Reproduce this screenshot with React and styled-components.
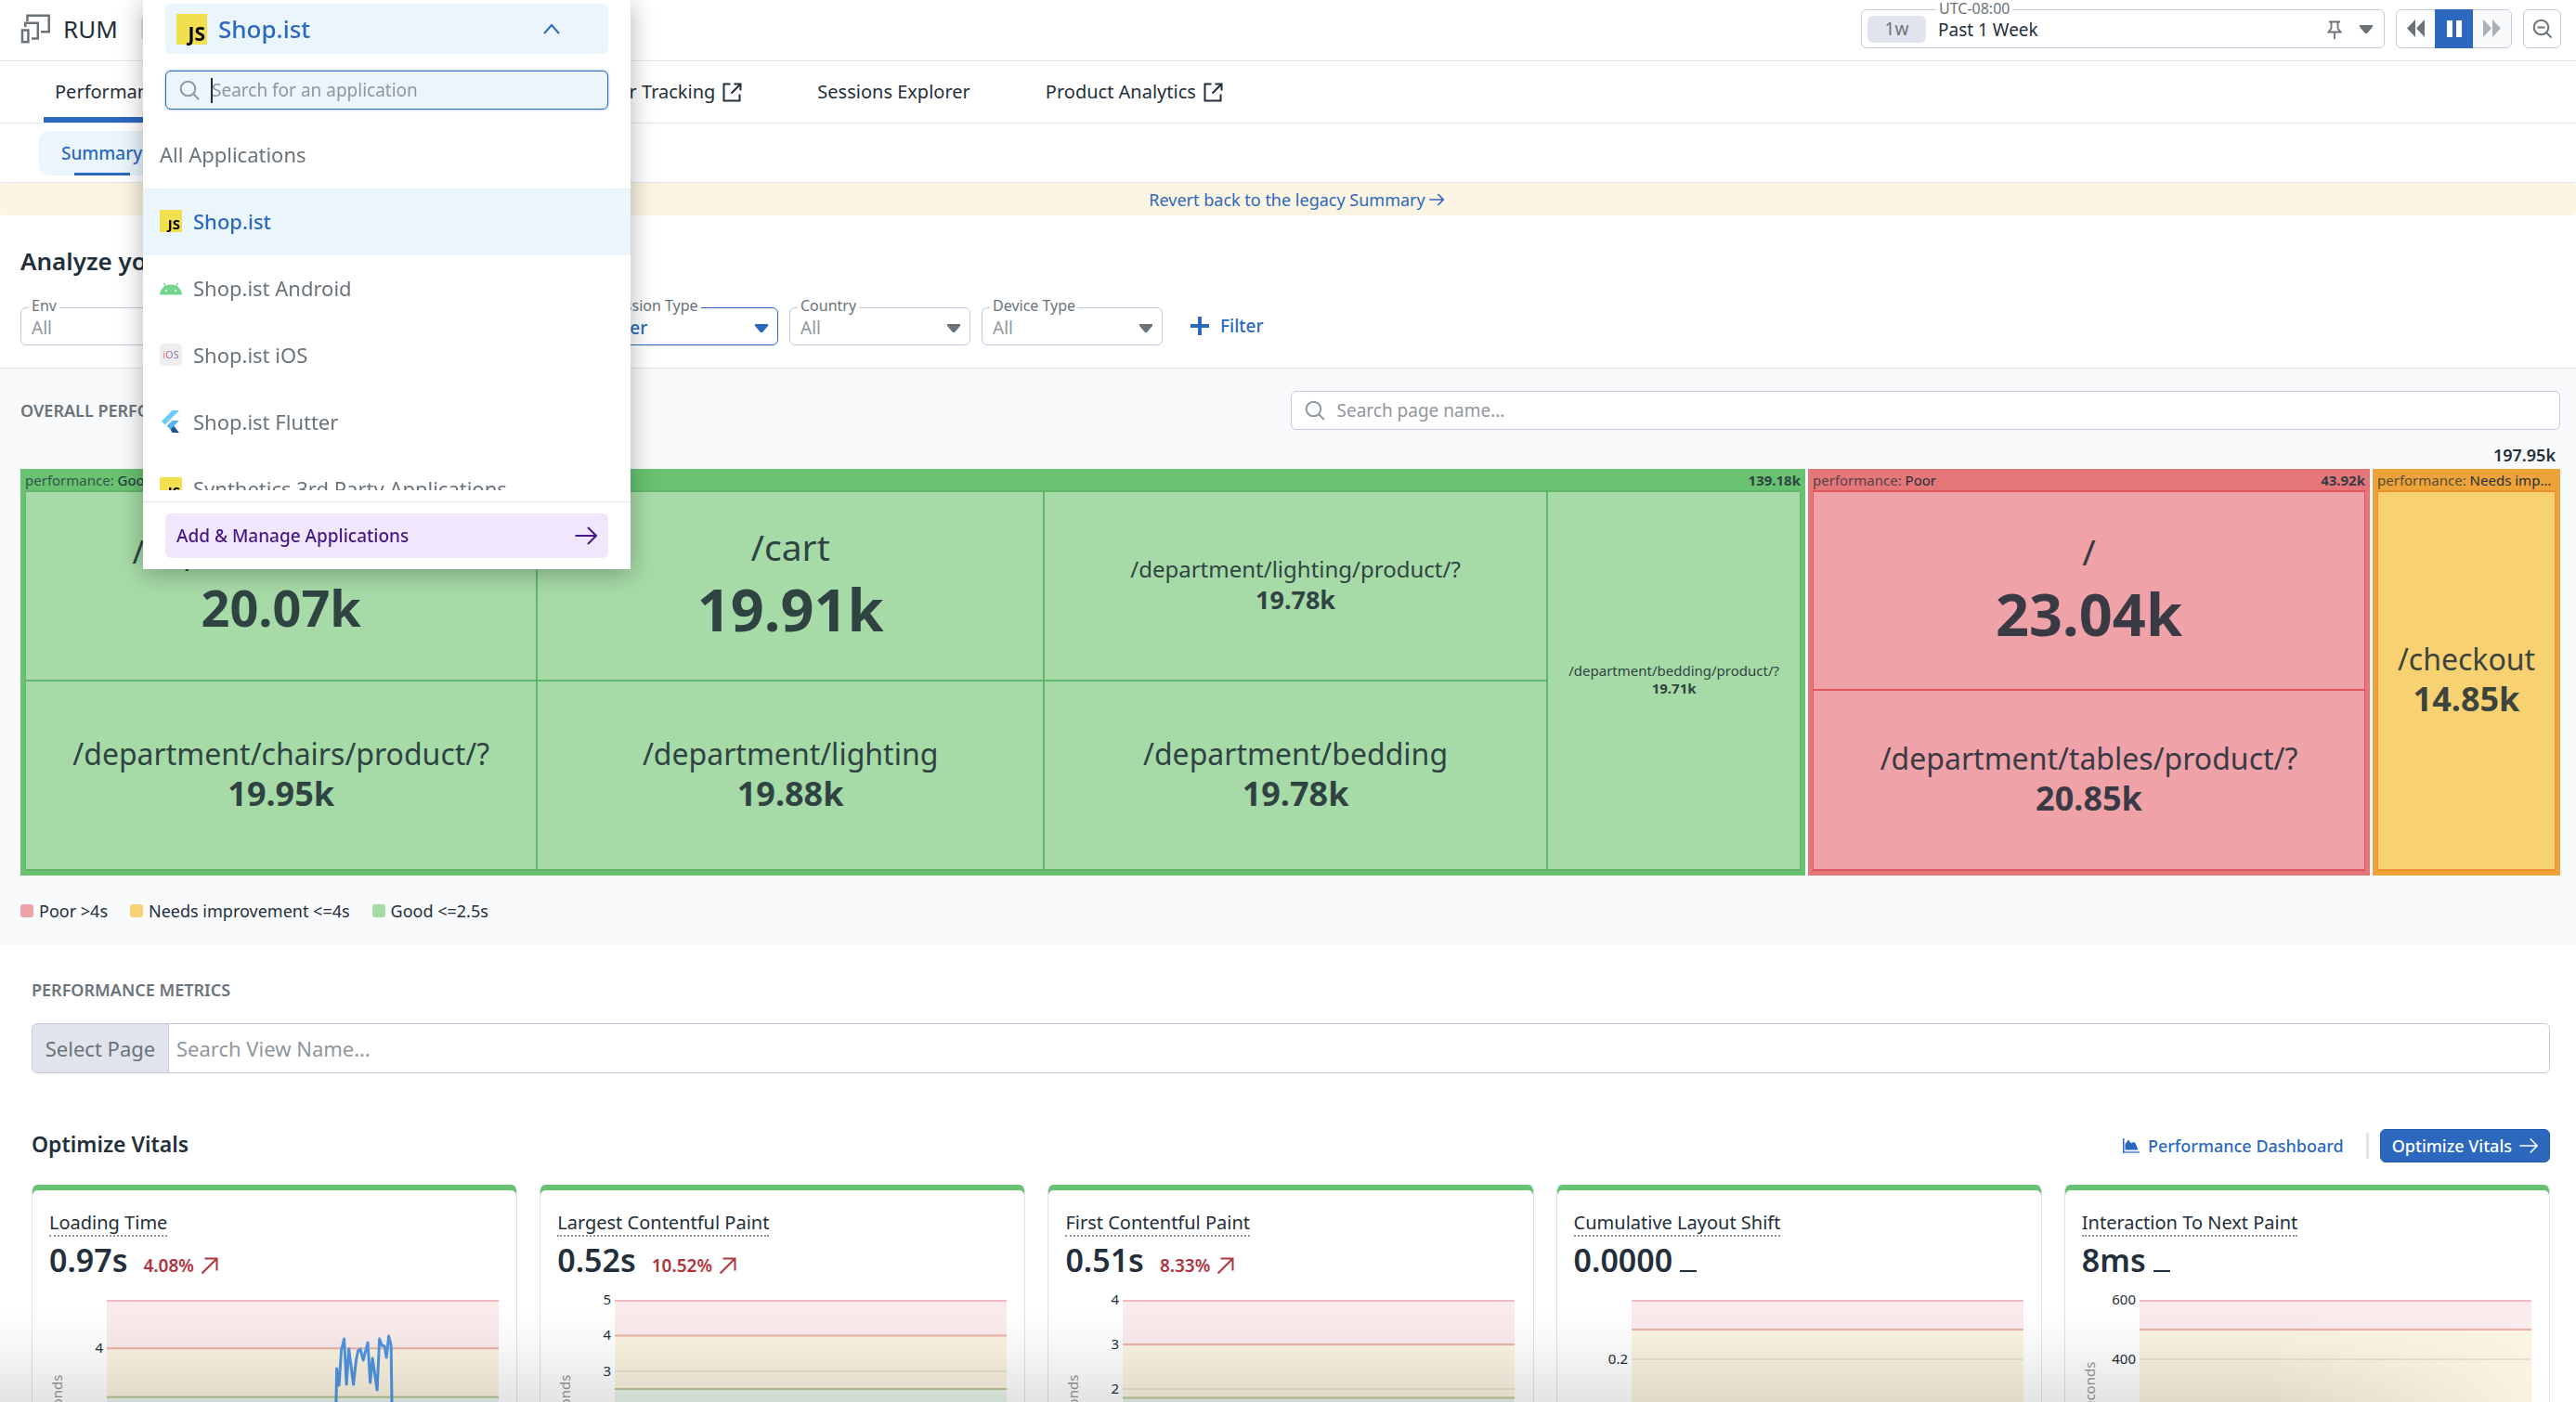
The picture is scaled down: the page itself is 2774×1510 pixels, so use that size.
import React from "react";
import styled, { createGlobalStyle, css } from "styled-components";

const c = {
  ink: "#232f3a",
  muted: "#6a737a",
  soft: "#8f979d",
  blue: "#2c68be",
  paleBlue: "#ebf5fc",
  line: "#e1e4ed",
  field: "#c3c8dc",
  red: "#b0343e",
};

const Global = createGlobalStyle`
  *, *::before, *::after { box-sizing: border-box; }
  body { margin: 0; background: #fff; color: ${c.ink}; font-family: "Noto Sans", "Open Sans", sans-serif; font-size: 19px; line-height: 28px; }
  button, input, select { font: inherit; color: inherit; margin: 0; }
  a { color: inherit; text-decoration: none; }
  h1, h2, h3, ul, p { margin: 0; padding: 0; font-size: inherit; }
  ul { list-style: none; }
  svg { display: block; flex: none; }
`;

const Page = styled.div`
  position: relative;
  height: 100vh;
  overflow-y: auto;
  scrollbar-width: none;
`;

/* ---------- icons ---------- */
const Svg = ({ w, h, vb, sw = 2, fill = "none", children, ...rest }) => (
  <svg width={w} height={h} viewBox={vb || `0 0 ${w} ${h}`} fill={fill} stroke={fill === "none" ? "currentColor" : "none"} strokeWidth={sw} aria-hidden="true" {...rest}>
    {children}
  </svg>
);
const RumIcon = () => (
  <Svg w={33} h={32} sw={2.5} color={c.muted}>
    <path d="M7.5 8V1.8h23.2v17.4H22" />
    <path d="M5.2 14V9.8h13.6v16.8H12" />
    <path d="M2 17.6h6.4v12.6H2z" />
  </Svg>
);
const SearchIcon = () => (
  <Svg w={22} h={22}>
    <circle cx="9.5" cy="9.5" r="7.8" />
    <path d="M15 15l6 6" />
  </Svg>
);
const ExternalIcon = () => (
  <Svg w={21} h={21}>
    <path d="M8.5 1.5H1.5v18h17v-7" />
    <path d="M9.5 11.5L19 2M12.5 1.5h7v7" />
  </Svg>
);
const ArrowRight = ({ size = 24, sw = 2 }) => (
  <Svg w={size} h={size} vb="0 0 24 24" sw={sw}>
    <path d="M0.5 12h22M14 3l9 9-9 9" />
  </Svg>
);
const ArrowUpRight = () => (
  <Svg w={19} h={19}>
    <path d="M1.5 17.5L17 2M4.5 1.5h13v13" />
  </Svg>
);
const Caret = () => (
  <Svg w={14} h={9} fill="currentColor">
    <path d="M0 0h14v2L8 9H6L0 2z" />
  </Svg>
);
const ChevronUp = () => (
  <Svg w={18} h={12}>
    <path d="M1 11l8-9 8 9" />
  </Svg>
);
const PlusIcon = () => (
  <Svg w={20} h={20} sw={4}>
    <path d="M10 0v20M0 10h20" />
  </Svg>
);
const PinIcon = () => (
  <Svg w={16} h={20} sw={1.8}>
    <path d="M2 1.5h12M4.5 1.5v7L1.5 12.500h13l-3-4v-7M8 12.500V20" />
  </Svg>
);
const RewindIcon = () => (
  <Svg w={19} h={19} fill="currentColor">
    <path d="M9 0v19L0 9.500zM19 0v19L10 9.500z" />
  </Svg>
);
const ForwardIcon = () => (
  <Svg w={19} h={19} fill="currentColor">
    <path d="M0 0v19l9-9.500zM10 0v19l9-9.500z" />
  </Svg>
);
const PauseIcon = () => (
  <Svg w={16} h={18} fill="currentColor">
    <path d="M0 0h6v18H0zM10 0h6v18h-6z" />
  </Svg>
);
const ZoomOutIcon = () => (
  <Svg w={21} h={21}>
    <circle cx="9.500" cy="9.500" r="7.800" />
    <path d="M15 15l5.500 5.500M5.500 9.500h8" />
  </Svg>
);
const DashboardIcon = () => (
  <Svg w={18} h={16} fill="currentColor">
    <path d="M0 0h1.500v16H0z" />
    <path d="M2.500 12.500V6l3.500-4.500 3 4 2-1.500 2.500 1 3 7.500z" />
    <path d="M1 14h17v2H1z" opacity=".6" />
  </Svg>
);
const JsTile = styled.span`
  flex: none;
  display: flex;
  align-items: flex-end;
  justify-content: flex-end;
  width: ${(p) => p.$size}px;
  height: ${(p) => p.$size}px;
  padding-right: 2px;
  background: #f2df4f;
  color: #000;
  font-size: ${(p) => (p.$size > 30 ? 21 : 15)}px;
  line-height: ${(p) => (p.$size > 30 ? 24 : 18)}px;
  font-weight: 700;
`;
const IosTile = styled.span`
  flex: none;
  width: 24px;
  height: 24px;
  border-radius: 5px;
  background: #eceef0;
  font-size: 11px;
  line-height: 24px;
  text-align: center;
  & > span {
    background: linear-gradient(90deg, #e8875a, #c0508c, #5a7fd8, #d04a5a);
    background-clip: text;
    color: transparent;
  }
`;
const AndroidIcon = () => (
  <svg width="24" height="24" viewBox="0 0 24 24" aria-hidden="true">
    <path d="M0 19.500a12 11 0 0 1 24 0z" fill="#72d68c" />
    <path d="M6.500 10.500L4.500 6.500M17.500 10.500l2-4" stroke="#72d68c" strokeWidth="1.200" />
    <circle cx="6.800" cy="15" r="1" fill="#fff" />
    <circle cx="17.200" cy="15" r="1" fill="#fff" />
  </svg>
);
const FlutterIcon = () => (
  <svg width="24" height="24" viewBox="0 0 24 24" aria-hidden="true">
    <path d="M13.500 0H21L5.700 15.500 2 11.800z" fill="#6bcbfb" />
    <path d="M13.500 11H21l-9.500 9.500-3.800-3.800z" fill="#55b4ef" />
    <path d="M11.500 20.500l3.700-3.700L21 24h-7.500z" fill="#205396" />
  </svg>
);

/* ---------- top bar ---------- */
const TopBar = styled.header`
  display: flex;
  align-items: center;
  height: 66px;
  padding: 0 16px 4px 22px;
  border-bottom: 1px solid ${c.line};
`;
const Product = styled.h1`
  display: flex;
  align-items: center;
  gap: 13px;
  font-size: 26px;
  font-weight: 400;
`;
const BarDivider = styled.span`
  width: 3px;
  height: 22px;
  margin-left: 25px;
  background: ${c.line};
`;
const TimeTools = styled.div`
  display: flex;
  gap: 12px;
  margin-left: auto;
`;
const outlined = css`
  height: 42px;
  border: 1px solid ${c.field};
  border-radius: 6px;
  background: #fff;
`;
const TimePicker = styled.button`
  ${outlined}
  position: relative;
  display: flex;
  align-items: center;
  width: 564px;
  padding: 2px 12px 0 6px;
  font-size: 19px;
  text-align: left;
`;
const Notch = styled.span`
  position: absolute;
  top: -12px;
  left: ${(p) => p.$left || 9}px;
  padding: 0 3px;
  background: linear-gradient(transparent 10px, #fff 10px);
  color: ${c.muted};
  font-size: 16px;
  line-height: 20px;
`;
const Chip = styled.span`
  width: 63px;
  height: 29px;
  margin-right: 13px;
  border-radius: 6px;
  background: ${c.line};
  color: ${c.muted};
  text-align: center;
`;
const PickerTail = styled.span`
  display: flex;
  align-items: center;
  gap: 19px;
  margin-left: auto;
  color: ${c.muted};
`;
const ButtonGroup = styled.div`
  ${outlined}
  display: flex;
`;
const GroupButton = styled.button`
  display: flex;
  align-items: center;
  justify-content: center;
  width: 41px;
  margin: ${(p) => (p.$on ? "-1px 0" : "0")};
  border: 0;
  padding: 0;
  border-radius: ${(p) => (p.$on ? "0" : "5px")};
  background: ${(p) => (p.$on ? c.blue : p.$dim ? "#f9fafc" : "transparent")};
  color: ${(p) => (p.$on ? "#fff" : p.$dim ? "#abb1b6" : c.muted)};
`;
const IconButton = styled.button`
  ${outlined}
  display: flex;
  align-items: center;
  justify-content: center;
  width: 41px;
  padding: 0;
  color: ${c.muted};
`;

/* ---------- application menu ---------- */
const Menu = styled.section`
  position: absolute;
  z-index: 5;
  top: 0;
  left: 154px;
  width: 525px;
  padding-top: 4px;
  background: #fff;
  box-shadow: 0 4px 26px rgba(0, 0, 0, 0.3);
`;
const MenuTrigger = styled.button`
  display: flex;
  align-items: center;
  gap: 12px;
  width: 477px;
  height: 54px;
  margin: 0 24px;
  padding: 0 52px 0 12px;
  border: 0;
  border-radius: 6px;
  background: ${c.paleBlue};
  color: ${c.blue};
  font-size: 26px;
  font-weight: 500;
  & > svg { margin-left: auto; }
`;
const MenuSearch = styled.label`
  position: relative;
  display: flex;
  align-items: center;
  gap: 13px;
  height: 42px;
  margin: 18px 24px 0;
  padding: 0 14px;
  border: 1px solid ${c.blue};
  border-radius: 6px;
  background: ${c.paleBlue};
  box-shadow: 0 0 3px rgba(44, 104, 190, 0.5);
  color: ${c.soft};
`;
const BareInput = styled.input`
  flex: 1;
  min-width: 0;
  border: 0;
  padding: 0;
  outline: 0;
  background: transparent;
  &::placeholder { color: ${c.soft}; opacity: 1; }
`;
const TextCursor = styled.span`
  position: absolute;
  left: 48px;
  width: 2px;
  height: 27px;
  background: ${c.ink};
`;
const AppList = styled.ul`
  height: 397px;
  margin-top: 13px;
  overflow-y: auto;
  scrollbar-width: none;
`;
const AppItem = styled.button`
  display: flex;
  align-items: center;
  gap: 12px;
  width: 100%;
  height: 72px;
  padding: 0 18px 2px;
  border: 0;
  background: ${(p) => (p.$on ? c.paleBlue : "#fff")};
  color: ${(p) => (p.$on ? c.blue : c.muted)};
  font-size: 22px;
  font-weight: ${(p) => (p.$on ? 500 : 400)};
  text-align: left;
`;
const MenuFooter = styled.div`
  margin-top: 12px;
  padding: 12px 24px;
  border-top: 1px solid ${c.line};
`;
const ManageLink = styled.a`
  display: flex;
  align-items: center;
  justify-content: space-between;
  height: 48px;
  padding: 0 12px;
  border-radius: 6px;
  background: #f1e7fc;
  color: #451784;
  font-weight: 500;
`;

/* ---------- navigation ---------- */
const Tabs = styled.nav`
  display: flex;
  gap: 57px;
  height: 67px;
  padding-left: 47px;
  border-bottom: 1px solid ${c.line};
  font-size: 20px;
`;
const Tab = styled.a`
  display: flex;
  align-items: center;
  gap: 8px;
  padding: 6px 12px 0;
  border-bottom: 6px solid ${(p) => (p.$on ? c.blue : "transparent")};
`;
const SubTabs = styled.nav`
  height: 64px;
  padding: 8px 42px;
  border-bottom: 1px solid ${c.line};
`;
const SubTab = styled.a`
  display: inline-flex;
  flex-direction: column;
  justify-content: space-between;
  align-items: center;
  height: 48px;
  padding: 10px 24px 0;
  border-radius: 10px;
  background: ${c.paleBlue};
  color: ${c.blue};
  font-weight: 500;
  &::after { content: ""; width: 60px; height: 3px; background: ${c.blue}; }
`;
const Banner = styled.div`
  display: flex;
  justify-content: center;
  height: 35px;
  padding-left: 18px;
  border-radius: 4px;
  background: #fdf5e3;
  color: ${c.blue};
  font-size: 18px;
  line-height: 36px;
  & > a { display: flex; align-items: center; gap: 4px; }
`;

/* ---------- filters ---------- */
const Filters = styled.section`
  padding: 35px 22px 24px;
  border-bottom: 1px solid ${c.line};
`;
const Heading = styled.h2`
  font-size: 26px;
  line-height: 28px;
  font-weight: 600;
`;
const FilterRow = styled.div`
  display: flex;
  align-items: center;
  gap: 12px;
  margin-top: 36px;
`;
const FilterField = styled.label`
  position: relative;
  width: 195px;
  color: ${(p) => (p.$on ? c.blue : c.muted)};
  & > svg { position: absolute; right: 11px; top: 18px; pointer-events: none; }
`;
const Select = styled.select`
  display: block;
  width: 100%;
  height: 41px;
  padding: 2px 30px 0 11px;
  appearance: none;
  border: 1px solid ${(p) => (p.$on ? c.blue : c.field)};
  border-radius: 6px;
  background: #fff;
  color: ${(p) => (p.$on ? c.blue : c.soft)};
  font-weight: ${(p) => (p.$on ? 500 : 400)};
`;
const AddFilter = styled.button`
  display: flex;
  align-items: center;
  gap: 12px;
  margin-left: 18px;
  padding: 0 0 1px;
  border: 0;
  background: none;
  color: ${c.blue};
  font-weight: 500;
`;

/* ---------- overall performance ---------- */
const Overall = styled.section`
  padding: 24px 17px 23px 22px;
  background: #f9fafc;
`;
const OverallHead = styled.div`
  display: grid;
  grid-template-columns: 1fr 1fr;
  align-items: center;
`;
const Eyebrow = styled.h2`
  color: ${c.muted};
  font-size: 18px;
  font-weight: 600;
`;
const PageSearch = styled.label`
  ${outlined}
  display: flex;
  align-items: center;
  gap: 13px;
  padding: 0 14px;
  color: ${c.soft};
`;
const Total = styled.p`
  padding: 13px 5px 1px 0;
  text-align: right;
  font-size: 18px;
  font-weight: 600;
`;
const Treemap = styled.div`
  display: grid;
  grid-template-columns: 1922fr 605fr 202fr;
  gap: 3px;
  height: 438px;
`;
const tones = {
  good: { head: "#69c271", cell: "#a6dba7", line: "#64b56c", ink: "#304343" },
  poor: { head: "#e57779", cell: "#efa2a8", line: "#dd5660", ink: "#3a3a45" },
  warn: { head: "#eda338", cell: "#f8d272", line: "#e8922f", ink: "#3c443c" },
};
const Group = styled.section`
  min-width: 0;
  display: flex;
  flex-direction: column;
  padding: 0 5px 5px;
  background: ${(p) => tones[p.$tone].head};
  color: ${(p) => tones[p.$tone].ink};
`;
const GroupHead = styled.h3`
  display: flex;
  justify-content: space-between;
  height: 23px;
  font-size: 15px;
  line-height: 24px;
  font-weight: 400;
  & > span { white-space: nowrap; overflow: hidden; text-overflow: ellipsis; color: ${c.ink}; }
  & > span > span { opacity: 0.75; }
`;
const Cells = styled.div`
  flex: 1;
  display: grid;
  grid-template-columns: ${(p) => p.$cols || "1fr"};
  grid-template-rows: ${(p) => p.$rows || "1fr"};
  gap: 2px;
  padding: 2px 1px;
  background: ${(p) => tones[p.$tone].line};
`;
const sizes = {
  tiny: [15, 19, 15, 19],
  small: [24, 31, 27, 35],
  mid: [32, 41, 36, 45],
  big: [35, 48, 54, 72],
  huge: [39, 52, 63, 82],
};
const Cell = styled.div`
  display: flex;
  flex-direction: column;
  align-items: center;
  justify-content: center;
  min-width: 0;
  padding-bottom: 2px;
  grid-row: ${(p) => (p.$tall ? "1 / 3" : "auto")};
  grid-column: ${(p) => (p.$tall ? "4" : "auto")};
  background: ${(p) => tones[p.$tone].cell};
  white-space: nowrap;
  font-size: ${(p) => sizes[p.$size][0]}px;
  line-height: ${(p) => sizes[p.$size][1]}px;
  & > strong { font-weight: 700; font-size: ${(p) => sizes[p.$size][2]}px; line-height: ${(p) => sizes[p.$size][3]}px; }
`;
const Legend = styled.ul`
  display: flex;
  gap: 24px;
  margin-top: 24px;
  font-size: 18px;
`;
const LegendItem = styled.li`
  display: flex;
  align-items: center;
  gap: 6px;
  &::before { content: ""; width: 14px; height: 14px; border-radius: 3px; background: ${(p) => tones[p.$tone].cell}; }
`;

/* ---------- metrics ---------- */
const Metrics = styled.section`
  padding: 34px 28px 40px 34px;
`;
const ViewSearch = styled.label`
  display: flex;
  height: 54px;
  margin-top: 22px;
  border: 1px solid ${c.field};
  border-radius: 6px;
  overflow: hidden;
  font-size: 22px;
  line-height: 52px;
  & > span { width: 147px; border-right: 1px solid ${c.field}; background: ${c.line}; color: ${c.muted}; text-align: center; }
  & > input { padding-left: 8px; }
`;
const VitalsHead = styled.div`
  display: flex;
  align-items: center;
  margin-top: 60px;
  font-size: 18px;
`;
const VitalsTitle = styled.h2`
  margin-right: auto;
  padding-bottom: 4px;
  font-size: 23px;
  font-weight: 600;
`;
const DashLink = styled.a`
  display: flex;
  align-items: center;
  gap: 9px;
  color: ${c.blue};
  font-weight: 500;
`;
const VitalsDivider = styled.span`
  width: 3px;
  height: 28px;
  margin: 0 12px 0 24px;
  background: ${c.line};
`;
const PrimaryButton = styled.button`
  display: flex;
  align-items: center;
  gap: 8px;
  height: 36px;
  padding: 0 12px;
  border: 1px solid #2456b0;
  border-radius: 6px;
  background: ${c.blue};
  color: #fff;
  font-size: 18px;
  font-weight: 500;
`;
const Cards = styled.div`
  display: grid;
  grid-template-columns: repeat(5, 1fr);
  gap: 24px;
  margin-top: 24px;
`;
const Card = styled.article`
  min-width: 0;
  padding: 27px 19px 20px 18px;
  border: 1px solid ${c.line};
  border-top: 0;
  border-radius: 6px;
  position: relative;
  overflow: hidden;
  box-shadow: inset 0 6px ${tones.good.head};
`;
const CardTitle = styled.h3`
  display: inline-block;
  border-bottom: 2px dotted ${c.soft};
  font-size: 20px;
  font-weight: 400;
  line-height: 26px;
`;
const CardValue = styled.div`
  display: flex;
  align-items: baseline;
  gap: 17px;
  height: 60px;
  line-height: 50px;
  & > strong { font-size: 34px; font-weight: 600; }
`;
const Change = styled.span`
  display: flex;
  align-items: center;
  gap: 7px;
  color: ${c.red};
  font-weight: 600;
  line-height: 28px;
`;
const Flat = styled.span`
  width: 18px;
  height: 2px;
  margin-left: -9px;
  background: ${c.ink};
`;
const ChartSvg = styled.svg`
  width: 100%;
  height: 230px;
  overflow: visible;
  font-size: 15px;
  & .plot { width: calc(100% - 62px); }
  & text { fill: ${c.ink}; }
  & .unit { fill: ${c.soft}; }
`;
const BottomShade = styled.div`
  position: fixed;
  inset: auto 0 0;
  height: 100px;
  pointer-events: none;
  background: linear-gradient(transparent, rgba(0, 0, 0, 0.03) 40%, rgba(0, 0, 0, 0.11));
  mask-image: linear-gradient(to right, #000 88%, transparent 99%);
`;

const TOP = 8;
const H = 192;
const Chart = ({ max, ticks, poor, good, unit, series }) => {
  const y = (v) => TOP + H * (1 - v / max);
  return (
    <ChartSvg role="img" aria-label={unit ? `Values in ${unit}` : "Values"}>
      <svg x="62" className="plot" height="230" viewBox="0 0 422 230" preserveAspectRatio="none">
        <rect y={TOP} width="422" height={y(poor) - TOP} fill="#faebec" />
        <rect y={y(poor)} width="422" height={y(good) - y(poor)} fill="#fcf4e2" />
        <rect y={y(good)} width="422" height={y(0) - y(good)} fill="#e9f5ec" />
        <path d={`M0 ${TOP + 1}H422`} stroke="#f0bcc1" strokeWidth="2" />
        {ticks.filter((t) => t !== max && t !== poor).map((t) => (
          <path key={t} d={`M0 ${y(t)}H422`} stroke="#e6e1d3" strokeWidth="2" />
        ))}
        <path d={`M0 ${y(poor)}H422`} stroke="#eab0a6" strokeWidth="2" />
        <path d={`M0 ${y(good)}H422`} stroke="#bcc695" strokeWidth="2" />
        {series && <polyline points={series} fill="none" stroke="#4f95e3" strokeWidth="3" strokeLinejoin="round" vectorEffect="non-scaling-stroke" />}
      </svg>
      {ticks.map((t) => (
        <text key={t} x="58" y={y(t) + 5} textAnchor="end">{t}</text>
      ))}
      {unit && (
        <text className="unit" x="14" y={TOP + 110} textAnchor="middle" transform={`rotate(-90 14 ${TOP + 110})`}>{unit}</text>
      )}
    </ChartSvg>
  );
};

const loadingSeries =
  "0,165 246,165 247.5,82 250,100 252.500,62 255.500,50 258,99 260.500,61 265.500,99 268.500,72 270.500,63 273,61 276,73 281,54 283.500,97 286,71 291,105 293.500,50 296,57 299,58 301,70 303.500,47 306,57 307.500,165 422,170";

const filters = [
  { id: "env", label: "Env", value: "All" },
  { id: "service", label: "Service", value: "All" },
  { id: "version", label: "Version", value: "All" },
  { id: "session", label: "Session Type", value: "User", on: true },
  { id: "country", label: "Country", value: "All" },
  { id: "device", label: "Device Type", value: "All" },
];
const apps = [
  { name: "All Applications" },
  { name: "Shop.ist", icon: <JsTile $size={24}>JS</JsTile>, on: true },
  { name: "Shop.ist Android", icon: <AndroidIcon /> },
  { name: "Shop.ist iOS", icon: <IosTile><span>iOS</span></IosTile> },
  { name: "Shop.ist Flutter", icon: <FlutterIcon /> },
  { name: "Synthetics 3rd Party Applications", icon: <JsTile $size={24}>JS</JsTile> },
];
const groups = [
  {
    tone: "good", label: "Good", total: "139.18k",
    cols: "550fr 544fr 541fr 271fr", rows: "1fr 1fr",
    cells: [
      ["/department/chairs", "20.07k", "big"],
      ["/cart", "19.91k", "huge"],
      ["/department/lighting/product/?", "19.78k", "small"],
      ["/department/bedding/product/?", "19.71k", "tiny", true],
      ["/department/chairs/product/?", "19.95k", "mid"],
      ["/department/lighting", "19.88k", "mid"],
      ["/department/bedding", "19.78k", "mid"],
    ],
  },
  {
    tone: "poor", label: "Poor", total: "43.92k", rows: "213fr 192fr",
    cells: [["/", "23.04k", "huge"], ["/department/tables/product/?", "20.85k", "mid"]],
  },
  { tone: "warn", label: "Needs improvement", cells: [["/checkout", "14.85k", "mid"]] },
];
const vitals = [
  { title: "Loading Time", value: "0.97s", change: "4.08%", chart: { max: 5.5, ticks: [4], poor: 4, good: 2.5, unit: "Seconds", series: loadingSeries } },
  { title: "Largest Contentful Paint", value: "0.52s", change: "10.52%", chart: { max: 5, ticks: [5, 4, 3, 2, 1, 0], poor: 4, good: 2.5, unit: "Seconds" } },
  { title: "First Contentful Paint", value: "0.51s", change: "8.33%", chart: { max: 4, ticks: [4, 3, 2, 1, 0], poor: 3, good: 1.8, unit: "Seconds" } },
  { title: "Cumulative Layout Shift", value: "0.0000", chart: { max: 0.3, ticks: [0.2, 0.1, 0], poor: 0.25, good: 0.1 } },
  { title: "Interaction To Next Paint", value: "8ms", chart: { max: 600, ticks: [600, 400, 200, 0], poor: 500, good: 200, unit: "Milliseconds" } },
];

export default function App() {
  return (
    <Page>
      <Global />
      <TopBar>
        <Product><RumIcon />RUM</Product>
        <BarDivider />
        <TimeTools>
          <TimePicker type="button">
            <Notch $left={80}>UTC-08:00</Notch>
            <Chip>1w</Chip>
            Past 1 Week
            <PickerTail><PinIcon /><Caret /></PickerTail>
          </TimePicker>
          <ButtonGroup>
            <GroupButton type="button" aria-label="Back"><RewindIcon /></GroupButton>
            <GroupButton type="button" aria-label="Pause" $on><PauseIcon /></GroupButton>
            <GroupButton type="button" aria-label="Forward" $dim><ForwardIcon /></GroupButton>
          </ButtonGroup>
          <IconButton type="button" aria-label="Zoom out"><ZoomOutIcon /></IconButton>
        </TimeTools>
      </TopBar>

      <Menu>
        <MenuTrigger type="button" aria-expanded="true">
          <JsTile $size={33}>JS</JsTile>Shop.ist<ChevronUp />
        </MenuTrigger>
        <MenuSearch>
          <SearchIcon />
          <TextCursor />
          <BareInput type="text" placeholder="Search for an application" aria-label="Search for an application" />
        </MenuSearch>
        <AppList>
          {apps.map((a) => (
            <li key={a.name}><AppItem type="button" $on={a.on}>{a.icon}{a.name}</AppItem></li>
          ))}
        </AppList>
        <MenuFooter>
          <ManageLink href="#manage">Add &amp; Manage Applications<ArrowRight /></ManageLink>
        </MenuFooter>
      </Menu>

      <Tabs>
        <Tab href="#performance" $on>Performance</Tab>
        <Tab href="#replay">Session Replay</Tab>
        <Tab href="#insights">Insights</Tab>
        <Tab href="#errors">Error Tracking<ExternalIcon /></Tab>
        <Tab href="#sessions">Sessions Explorer</Tab>
        <Tab href="#analytics">Product Analytics<ExternalIcon /></Tab>
      </Tabs>
      <SubTabs><SubTab href="#summary">Summary</SubTab></SubTabs>
      <Banner><a href="#legacy">Revert back to the legacy Summary<ArrowRight size={16} sw={2.5} /></a></Banner>

      <Filters>
        <Heading>Analyze your application performance</Heading>
        <FilterRow>
          {filters.map((f) => (
            <FilterField key={f.id} htmlFor={f.id} $on={f.on}>
              <Notch>{f.label}</Notch>
              <Select id={f.id} $on={f.on} defaultValue={f.value}><option>{f.value}</option></Select>
              <Caret />
            </FilterField>
          ))}
          <AddFilter type="button"><PlusIcon />Filter</AddFilter>
        </FilterRow>
      </Filters>

      <Overall>
        <OverallHead>
          <Eyebrow>OVERALL PERFORMANCE</Eyebrow>
          <PageSearch>
            <SearchIcon />
            <BareInput type="text" placeholder="Search page name…" aria-label="Search page name" />
          </PageSearch>
        </OverallHead>
        <Total>197.95k</Total>
        <Treemap>
          {groups.map((g) => (
            <Group key={g.tone} $tone={g.tone}>
              <GroupHead>
                <span><span>performance:</span> {g.label}</span>
                {g.total && <strong>{g.total}</strong>}
              </GroupHead>
              <Cells $tone={g.tone} $cols={g.cols} $rows={g.rows}>
                {g.cells.map(([path, count, size, tall]) => (
                  <Cell key={path} $tone={g.tone} $size={size} $tall={tall}>
                    <span>{path}</span>
                    <strong>{count}</strong>
                  </Cell>
                ))}
              </Cells>
            </Group>
          ))}
        </Treemap>
        <Legend>
          <LegendItem $tone="poor">Poor &gt;4s</LegendItem>
          <LegendItem $tone="warn">Needs improvement &lt;=4s</LegendItem>
          <LegendItem $tone="good">Good &lt;=2.5s</LegendItem>
        </Legend>
      </Overall>

      <Metrics>
        <Eyebrow>PERFORMANCE METRICS</Eyebrow>
        <ViewSearch>
          <span>Select Page</span>
          <BareInput type="text" placeholder="Search View Name…" />
        </ViewSearch>
        <VitalsHead>
          <VitalsTitle>Optimize Vitals</VitalsTitle>
          <DashLink href="#dashboard"><DashboardIcon />Performance Dashboard</DashLink>
          <VitalsDivider />
          <PrimaryButton type="button">Optimize Vitals<ArrowRight size={20} /></PrimaryButton>
        </VitalsHead>
        <Cards>
          {vitals.map((v) => (
            <Card key={v.title}>
              <CardTitle>{v.title}</CardTitle>
              <CardValue>
                <strong>{v.value}</strong>
                {v.change ? <Change>{v.change}<ArrowUpRight /></Change> : <Flat />}
              </CardValue>
              <Chart {...v.chart} />
            </Card>
          ))}
        </Cards>
      </Metrics>
      <BottomShade />
    </Page>
  );
}
